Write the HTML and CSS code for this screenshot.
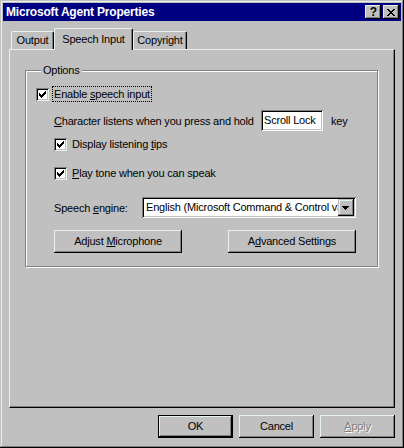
FILE: index.html
```html
<!DOCTYPE html>
<html>
<head>
<meta charset="utf-8">
<link rel="stylesheet" href="styles.css">
</head>
<body>
<div class="window">
  <div class="titlebar">
    <span class="title">Microsoft Agent Properties</span>
    <div class="caption-btns">
      <span class="cbtn help">?</span>
      <span class="cbtn close"><svg width="8" height="7" viewBox="0 0 8 7" shape-rendering="crispEdges"><path d="M0 0h2v1h-2zM6 0h2v1h-2zM1 1h2v1h-2zM5 1h2v1h-2zM2 2h4v1h-4zM3 3h2v1h-2zM2 4h4v1h-4zM1 5h2v1h-2zM5 5h2v1h-2zM0 6h2v1h-2zM6 6h2v1h-2z" fill="#000"/></svg></span>
    </div>
  </div>
  <div class="content">
    <div class="tabs">
      <div class="tab t-output">Output</div>
      <div class="tab active t-speech">Speech Input</div>
      <div class="tab t-copy">Copyright</div>
    </div>
    <div class="panel">
      <fieldset class="group">
        <legend>Options</legend>
        <div class="row r1">
          <span class="check"><svg width="7" height="7" viewBox="0 0 7 7" shape-rendering="crispEdges"><path d="M6 0h1v1h-1zM5 1h2v1h-2zM0 2h1v1h-1zM4 2h3v1h-3zM0 3h2v1h-2zM3 3h3v1h-3zM0 4h5v1h-5zM1 5h3v1h-3zM2 6h1v1h-1z" fill="#000"/></svg></span>
          <span class="focus">Enable <u>s</u>peech input</span>
        </div>
        <div class="row r2 indent">
          <span class="charlbl"><u>C</u>haracter listens when you press and hold</span>
          <span class="field">Scroll Lock</span>
          <span class="keylbl">key</span>
        </div>
        <div class="row r3 indent">
          <span class="check"><svg width="7" height="7" viewBox="0 0 7 7" shape-rendering="crispEdges"><path d="M6 0h1v1h-1zM5 1h2v1h-2zM0 2h1v1h-1zM4 2h3v1h-3zM0 3h2v1h-2zM3 3h3v1h-3zM0 4h5v1h-5zM1 5h3v1h-3zM2 6h1v1h-1z" fill="#000"/></svg></span>
          <span class="clabel">Display listening <u>t</u>ips</span>
        </div>
        <div class="row r4 indent">
          <span class="check"><svg width="7" height="7" viewBox="0 0 7 7" shape-rendering="crispEdges"><path d="M6 0h1v1h-1zM5 1h2v1h-2zM0 2h1v1h-1zM4 2h3v1h-3zM0 3h2v1h-2zM3 3h3v1h-3zM0 4h5v1h-5zM1 5h3v1h-3zM2 6h1v1h-1z" fill="#000"/></svg></span>
          <span class="clabel"><u>P</u>lay tone when you can speak</span>
        </div>
        <div class="row r5 indent">
          <span class="englbl">Speech <u>e</u>ngine:</span>
          <div class="combo">
            <span class="combo-text">English (Microsoft Command &amp; Control v3</span>
            <span class="combo-btn"><svg width="7" height="4" viewBox="0 0 7 4" shape-rendering="crispEdges"><path d="M0 0h7v1h-1v1h-1v1h-1v1h-1v-1h-1v-1h-1v-1h-1z" fill="#000"/></svg></span>
          </div>
        </div>
        <div class="row r6 indent">
          <span class="btn wide"><span>Adjust <u>M</u>icrophone</span></span>
          <span class="btn wide adv"><span>A<u>d</u>vanced Settings</span></span>
        </div>
      </fieldset>
    </div>
    <div class="footer">
      <span class="btn dlg default"><span>OK</span></span>
      <span class="btn dlg"><span>Cancel</span></span>
      <span class="btn dlg disabled"><span><u>A</u>pply</span></span>
    </div>
  </div>
</div>
</body>
</html>
```
FILE: styles.css
```css
:root {
  --hl: #e6f4e6;
  --face: #c0c0c0;
  --shadow: #808080;
}
* { box-sizing: border-box; }
html, body {
  margin: 0;
  padding: 0;
  background: var(--face);
}
body {
  font-family: "Liberation Sans", Arial, sans-serif;
  font-size: 11px;
  letter-spacing: -0.2px;
  color: #000;
}
u { text-decoration: underline; text-underline-offset: 1px; }

.window {
  width: 404px;
  height: 448px;
  padding: 3px;
  background: var(--face);
  box-shadow: inset -1px -1px #000, inset 1px 1px var(--face), inset -2px -2px var(--shadow), inset 2px 2px var(--hl);
  display: flex;
  flex-direction: column;
}

.titlebar {
  height: 18px;
  background: #000080;
  display: flex;
  align-items: center;
  justify-content: space-between;
  padding: 0 2px 0 3px;
}
.title {
  color: #fff;
  font-weight: bold;
  font-size: 12px;
  letter-spacing: -0.2px;
}
.caption-btns { display: flex; gap: 2px; }
.cbtn {
  width: 16px;
  height: 14px;
  background: var(--face);
  box-shadow: inset -1px -1px #000, inset 1px 1px var(--hl), inset -2px -2px var(--shadow);
  display: flex;
  align-items: center;
  justify-content: center;
}
.help {
  font-weight: bold;
  font-size: 12px;
  line-height: 12px;
  padding-left: 1px;
  letter-spacing: 0;
}
.close svg { display: block; margin-left: -1px; }

.content {
  flex: 1;
  padding: 0 6px;
  display: flex;
  flex-direction: column;
}

.tabs {
  display: flex;
  height: 21px;
  margin-top: 7px;
  padding-left: 2px;
  align-items: flex-end;
  position: relative;
  z-index: 1;
}
.tab {
  height: 18px;
  background: var(--face);
  border-left: 1px solid var(--hl);
  border-top: 1px solid var(--hl);
  border-right: 1px solid #000;
  border-radius: 2px 2px 0 0;
  box-shadow: inset -1px 0 var(--shadow);
  text-align: center;
  padding-top: 2px;
  line-height: 13px;
}
.t-output { width: 43px; }
.t-speech { width: 79px; }
.t-copy { width: 54px; }
.tab.active {
  height: 22px;
  margin-bottom: -1px;
  padding-top: 4px;
}

.panel {
  width: 386px;
  height: 359px;
  border: 1px solid;
  border-color: var(--hl) #000 #000 var(--hl);
  box-shadow: inset -1px -1px var(--shadow);
  padding: 0;
}

.group {
  margin: 14px 0 0 15px;
  width: 353px;
  border: 1px solid var(--shadow);
  box-shadow: inset 1px 1px #fff, 1px 1px #fff;
  padding: 0 0 13px 10px;
  min-width: 0;
}
.group legend {
  margin-left: 5px;
  padding: 0 2px;
  line-height: 13px;
  background: var(--face);
}

.row {
  display: flex;
  align-items: center;
}
.indent { margin-left: 18px; }
.r1 { height: 16px; margin-top: 9px; }
.r2 { height: 21px; margin-top: 8px; }
.r3 { height: 16px; margin-top: 5px; }
.r4 { height: 16px; margin-top: 13px; }
.r5 { height: 21px; margin-top: 16px; }
.r6 { height: 23px; margin-top: 12px; }

.check {
  width: 13px;
  height: 13px;
  flex: none;
  background: #fff;
  box-shadow: inset 1px 1px var(--shadow), inset -1px -1px var(--hl), inset 2px 2px #000, inset -2px -2px var(--face);
  padding: 3px;
  display: flex;
}
.check svg { display: block; }
.focus {
  margin-left: 3px;
  border: 1px dotted #000;
  padding: 0 1px;
  line-height: 14px;
}
.clabel { margin-left: 5px; }

.charlbl { width: 199px; flex: none; white-space: nowrap; }
.field {
  width: 62px;
  height: 21px;
  margin-left: 8px;
  background: #fff;
  box-shadow: inset 1px 1px var(--shadow), inset -1px -1px #fff, inset 2px 2px #000, inset -2px -2px var(--face);
  padding: 0 3px;
  line-height: 21px;
}
.keylbl { margin-left: 8px; }

.englbl { width: 88px; flex: none; }
.combo {
  width: 214px;
  height: 21px;
  background: #fff;
  box-shadow: inset 1px 1px var(--shadow), inset -1px -1px #fff, inset 2px 2px #000, inset -2px -2px var(--face);
  padding: 2px;
  display: flex;
}
.combo-text {
  flex: 1;
  overflow: hidden;
  white-space: nowrap;
  line-height: 17px;
  padding-left: 2px;
}
.combo-btn {
  width: 16px;
  height: 17px;
  flex: none;
  background: var(--face);
  box-shadow: inset -1px -1px #000, inset 1px 1px var(--face), inset -2px -2px var(--shadow), inset 2px 2px var(--hl);
  display: flex;
  align-items: center;
  justify-content: center;
}
.combo-btn svg { display: block; margin-left: -1px; }

.btn {
  height: 23px;
  background: var(--face);
  box-shadow: inset -1px -1px #000, inset 1px 1px var(--hl), inset -2px -2px var(--shadow), inset 2px 2px var(--face);
  display: flex;
  align-items: center;
  justify-content: center;
  line-height: 13px;
  white-space: pre;
}
.wide { width: 128px; }
.adv { margin-left: 46px; }

.footer {
  display: flex;
  justify-content: flex-end;
  gap: 6px;
  margin-top: 7px;
}
.dlg { width: 75px; }
.btn.default {
  box-shadow: inset 0 0 0 1px #000, inset -2px -2px #000, inset 2px 2px var(--hl), inset -3px -3px var(--shadow);
}
.btn.disabled {
  color: var(--shadow);
  text-shadow: 1px 1px #fff;
}
```
